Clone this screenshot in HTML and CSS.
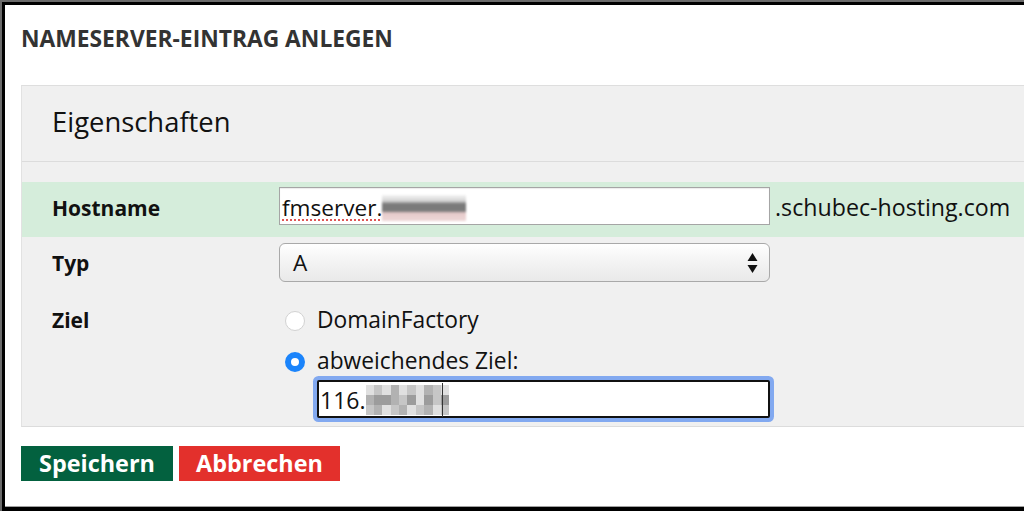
FILE: index.html
```html
<!DOCTYPE html>
<html lang="de">
<head>
<meta charset="utf-8">
<title>Nameserver-Eintrag anlegen</title>
<link rel="stylesheet" href="styles.css">
</head>
<body>
<div class="frame">
  <div class="head"><h1 class="title">NAMESERVER-EINTRAG ANLEGEN</h1></div>
  <section class="panel">
    <div class="panel-head">Eigenschaften</div>
    <div class="panel-body">
      <div class="row row-hl">
        <label class="label">Hostname</label>
        <div class="field">
          <div class="input"><span class="spell">fmserver.</span><span class="redact"></span></div>
          <span class="suffix">.schubec-hosting.com</span>
        </div>
      </div>
      <div class="row row-typ">
        <label class="label">Typ</label>
        <div class="field">
          <div class="select">
            <span>A</span>
            <svg class="arrows" width="11" height="20" viewBox="0 0 11 20"><path d="M5.5 0 L10.5 8 L0.5 8 Z M0.5 12 L10.5 12 L5.5 20 Z" fill="#111"/></svg>
          </div>
        </div>
      </div>
      <div class="row row-ziel">
        <label class="label label-ziel">Ziel</label>
        <div class="field field-col">
          <div class="radio-line"><span class="radio"></span><span class="radio-text">DomainFactory</span></div>
          <div class="radio-line line2"><span class="radio checked"></span><span class="radio-text">abweichendes Ziel:</span></div>
          <div class="input input-focus">
            <span>116.</span>
            <span class="mosaic">
              <i class="m1"></i><i class="m2"></i><i class="m1"></i><i class="m3"></i><i class="m1"></i><i class="m2"></i><i class="m1"></i><i class="m3"></i><i class="m2"></i><i class="m1"></i>
              <i class="m3"></i><i class="m4"></i><i class="m4"></i><i class="m3"></i><i class="m2"></i><i class="m4"></i><i class="m1"></i><i class="m4"></i><i class="m2"></i><i class="m4"></i>
              <i class="m2"></i><i class="m3"></i><i class="m1"></i><i class="m2"></i><i class="m3"></i><i class="m1"></i><i class="m2"></i><i class="m3"></i><i class="m1"></i><i class="m2"></i>
            </span>
            <span class="caret"></span>
          </div>
        </div>
      </div>
    </div>
  </section>
  <div class="actions">
    <button class="btn btn-save">Speichern</button>
    <button class="btn btn-cancel">Abbrechen</button>
  </div>
</div>
</body>
</html>
```
FILE: styles.css
```css
* { box-sizing: border-box; }
html, body { margin: 0; padding: 0; }
body {
  background: #6a6a6a;
  height: 511px;
  overflow: hidden;
  font-family: "Open Sans", "Noto Sans", sans-serif;
  color: #111;
}
.frame {
  margin: 2px 0 0 2px;
  height: 509px;
  background: #fff;
  border-top: 3px solid #000;
  border-left: 3px solid #000;
  border-bottom: 4px solid #000;
  box-shadow: inset 0 -1px 0 #a0a0a0;
  overflow: hidden;
}
.head {
  height: 80px;
  padding: 19px 16px 0;
}
.title {
  margin: 0;
  font-size: 22.8px;
  line-height: 30px;
  font-weight: 700;
  color: #333;
}
.panel {
  margin-left: 16px;
  background: #f0f0f0;
  border-top: 1px solid #dedede;
  border-left: 1px solid #e2e2e2;
  border-bottom: 1px solid #dcdcdc;
}
.panel-head {
  height: 76px;
  padding-left: 30px;
  font-size: 27.4px;
  line-height: 72px;
  border-bottom: 1px solid #dcdcdc;
}
.panel-body {
  padding: 20px 0 8px;
}
.row {
  display: flex;
  align-items: baseline;
}
.label {
  width: 257px;
  flex: none;
  padding-left: 30px;
  font-size: 21px;
  font-weight: 700;
}
.row-hl {
  background: #d5eddb;
  padding: 5px 0 12px;
}
.field {
  display: flex;
  align-items: baseline;
}
.input {
  width: 491px;
  height: 38px;
  background: #fff;
  border: 1px solid #a5a5a5;
  box-shadow: inset 0 1px 1px rgba(0,0,0,0.08);
  padding: 2px 2px 0;
  font-size: 22.6px;
  display: flex;
  align-items: center;
}
.spell {
  text-decoration: underline dotted #e05555;
  text-decoration-thickness: 2px;
  text-underline-offset: 4px;
}
.redact {
  display: inline-block;
  width: 84px;
  height: 26px;
  margin-top: 2px;
  background: linear-gradient(#f4f4f4 0, #d4d4d4 6px, #7a7a7a 9px, #7a7a7a 16px, #e6caca 18px, #eed8d8 26px);
  filter: blur(1px);
}
.suffix {
  margin-left: 5px;
  font-size: 23.2px;
}
.row-typ {
  padding: 6px 0;
}
.select {
  width: 491px;
  height: 39px;
  border: 1px solid #a9a9a9;
  border-radius: 6px;
  background: linear-gradient(#ffffff 0%, #f4f4f4 45%, #e9e9e9 100%);
  display: flex;
  align-items: center;
  justify-content: space-between;
  padding: 0 11px 0 13px;
  font-size: 22.6px;
}
.arrows { display: block; }
.row-ziel {
  align-items: flex-start;
  padding-top: 19px;
}
.label-ziel {
  line-height: 28px;
  margin-top: -1px;
}
.field-col {
  flex-direction: column;
  align-items: flex-start;
}
.radio-line {
  display: flex;
  align-items: center;
  height: 28px;
  font-size: 22.8px;
  padding-left: 6px;
}
.radio-text {
  line-height: 28px;
  padding-bottom: 2px;
}
.radio-line.line2 { margin-top: 13px; }
.radio {
  width: 20px;
  height: 20px;
  border-radius: 50%;
  background: #fff;
  border: 1px solid #d2d2d2;
  margin-right: 12px;
  flex: none;
}
.radio.checked {
  border: 6px solid #1b84fb;
  background: #fff;
}
.input-focus {
  margin-left: 38px;
  margin-top: 4px;
  width: 453px;
  border: 2px solid #111;
  border-radius: 2px;
  box-shadow: 0 0 0 4px #82a9f0;
  position: relative;
  padding-left: 1px;
  font-size: 23px;
}
.mosaic {
  display: grid;
  grid-template-columns: repeat(10, 8.4px);
  grid-auto-rows: 10px;
  filter: blur(0.5px);
}
.mosaic i { display: block; }
.m1 { background: #e0e0e0; }
.m2 { background: #c6c6c6; }
.m3 { background: #b2b2b2; }
.m4 { background: #9c9c9c; }
.caret {
  position: absolute;
  left: 123px;
  top: 1px;
  width: 1px;
  height: 34px;
  background: #333;
}
.actions {
  display: flex;
  gap: 6px;
  margin: 19px 0 0 16px;
}
.btn {
  height: 35px;
  border: 0;
  padding: 0;
  text-align: center;
  font-family: "Open Sans", "Noto Sans", sans-serif;
  font-size: 23.4px;
  font-weight: 700;
  color: #fff;
  line-height: 35px;
}
.btn-save { background: #03613f; width: 152px; }
.btn-cancel { background: #e3302c; width: 161px; }
```
